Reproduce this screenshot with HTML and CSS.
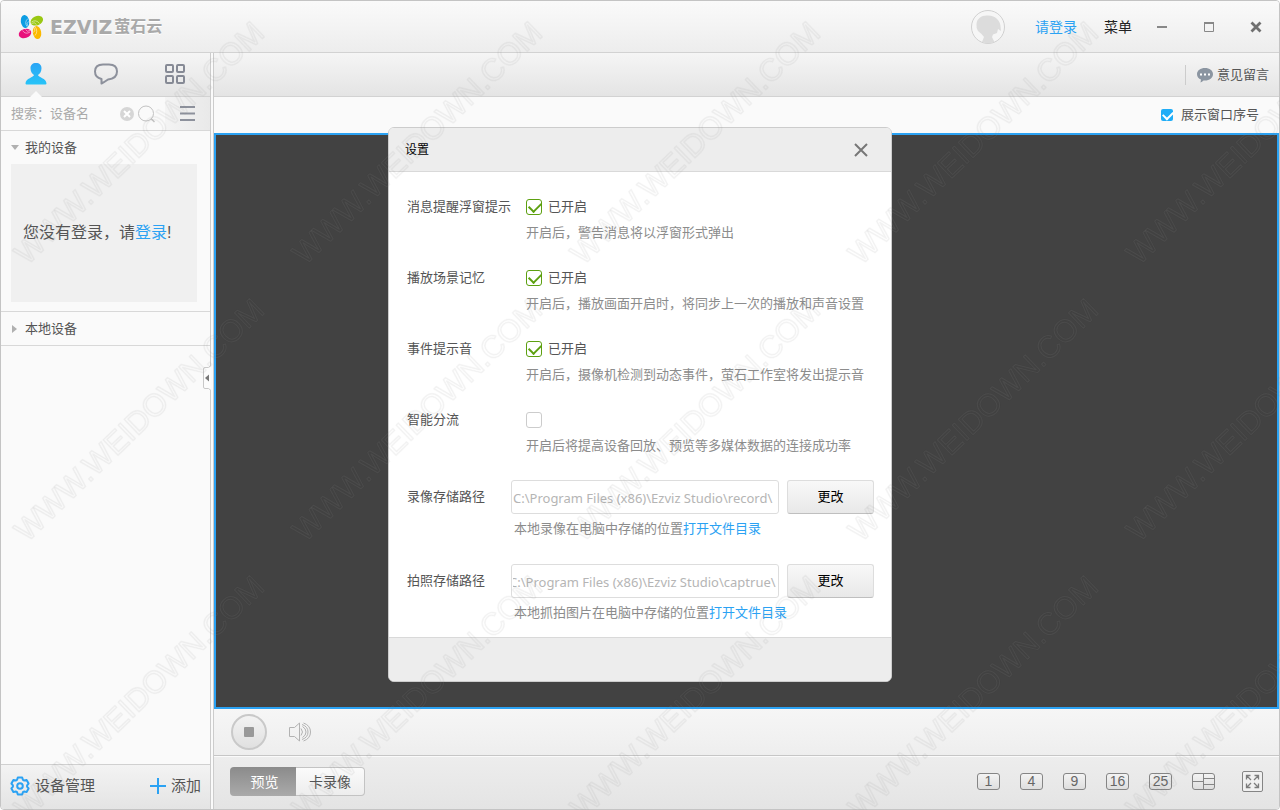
FILE: index.html
```html
<!DOCTYPE html>
<html lang="zh-CN">
<head>
<meta charset="utf-8">
<title>EZVIZ萤石云</title>
<link rel="stylesheet" href="styles.css">
</head>
<body>
<div class="window">
  <header class="titlebar">
    <div class="brand">
      <svg class="brand-mark" width="28" height="26" viewBox="0 0 28 26" aria-hidden="true">
        <ellipse cx="8" cy="7.500" rx="4.200" ry="6.500" fill="#0d9de3" transform="rotate(-8 8 7.500)"/>
        <ellipse cx="19.800" cy="6.700" rx="6.500" ry="4.600" fill="#9ac813" transform="rotate(-22 19.800 6.700)"/>
        <ellipse cx="8" cy="19.500" rx="6.400" ry="4.500" fill="#e8127c" transform="rotate(-18 8 19.500)"/>
        <ellipse cx="20" cy="18.500" rx="4.200" ry="6.600" fill="#fbb900" transform="rotate(-8 20 18.500)"/>
        <path fill="none" stroke="#fff" stroke-width=".5" d="M11 4.500Q7 8 10 12.500M11.500 7.500Q9 9 11 12.500M22.500 9.500Q19 5 14.500 8M19.500 10.500Q17.500 7.500 14.500 9.500M5.500 16.500Q8.500 21 13 18M8.500 15.500Q10 18.500 13 16.500M18 21.500Q21.500 17.500 18 12.500M16.500 18.500Q19 16.500 17 13.500"/>
      </svg>
      <span class="brand-text">EZVIZ</span><span class="brand-cn">萤石云</span>
    </div>
    <div class="account">
      <svg class="avatar" width="36" height="36" viewBox="0 0 36 36" aria-hidden="true">
        <circle cx="18" cy="18" r="16.500" fill="#f6f6f6" stroke="#d0d0d0"/>
        <path fill="#dcdcdc" d="M6.500 15C7 9 12 6 18 6.500C26 6.500 30 12 30.500 17L31 22L28 20L27 24L23 25.500L22 28L24.500 33Q18 35.500 12 33L14 28Q12 25 8 22Q6 19 6.500 15Z"/>
      </svg>
      <a class="login" href="#">请登录</a>
      <button class="menu" type="button">菜单</button>
      <div class="window-buttons">
        <button type="button" aria-label="最小化"><svg width="12" height="12" viewBox="0 0 12 12"><path d="M1 6H11" stroke="#888" stroke-width="2"/></svg></button>
        <button type="button" aria-label="最大化"><svg width="12" height="12" viewBox="0 0 12 12"><path d="M1.500 1.500h9v9h-9z" fill="none" stroke="#888"/><path d="M1 2h10" stroke="#888" stroke-width="2"/></svg></button>
        <button type="button" aria-label="关闭"><svg width="12" height="12" viewBox="0 0 12 12"><path d="M1.500 1.500L10.500 10.500M10.500 1.500L1.500 10.500" stroke="#707070" stroke-width="2.800"/></svg></button>
      </div>
    </div>
  </header>

  <div class="workspace">
    <aside class="sidebar">
      <nav class="tabs">
        <button class="tab tab-active" type="button" aria-label="设备">
          <svg width="22" height="22" viewBox="0 0 22 22"><defs><linearGradient id="blue" x2="0" y2="1"><stop stop-color="#2aa4f5"/><stop offset="1" stop-color="#27c4f8"/></linearGradient></defs><path fill="url(#blue)" d="M11 0C14.500 0 16.500 2 16.500 5.200C16.500 9 14.500 11 13 12C13 14.500 21.500 15 21.500 20.500Q21.500 21.500 20.500 21.500H1.500Q.5 21.500 .5 20.500C.5 15 9 14.500 9 12C7.500 11 5.500 9 5.500 5.200C5.500 2 7.500 0 11 0Z"/></svg>
        </button>
        <button class="tab" type="button" aria-label="消息">
          <svg width="24" height="22" viewBox="0 0 24 22"><path fill="none" stroke="#8d919c" stroke-width="2" stroke-linejoin="round" d="M9 1.500H15C20.500 1.500 23 4.500 23 8.500C23 13.500 19 16 14 16.500Q10.500 19 7.500 20.500L7.500 16C3.500 15 1 12.500 1 8.500C1 4.500 3.500 1.500 9 1.500Z"/></svg>
        </button>
        <button class="tab" type="button" aria-label="应用">
          <svg width="22" height="22" viewBox="0 0 22 22"><g fill="none" stroke="#868a95" stroke-width="2"><rect x="2" y="2" width="7" height="7" rx="1"/><rect x="13" y="2" width="7" height="7" rx="1"/><rect x="2" y="13" width="7" height="7" rx="1"/><rect x="13" y="13" width="7" height="7" rx="1"/></g></svg>
        </button>
      </nav>
      <div class="search">
        <input class="search-input" type="text" placeholder="搜索：设备名" aria-label="搜索：设备名">
        <button class="search-icon" type="button" aria-label="清除"><svg width="14" height="14" viewBox="0 0 14 14"><circle cx="7" cy="7" r="7" fill="#d6d6d6"/><path d="M4 4L10 10M10 4L4 10" stroke="#fff" stroke-width="2"/></svg></button>
        <button class="search-icon" type="button" aria-label="搜索"><svg width="20" height="18" viewBox="0 0 20 18"><circle cx="9" cy="8.500" r="7.500" fill="none" stroke="#c2c2c2"/><path d="M14 13.500L17.500 17" stroke="#c2c2c2" stroke-width="1.500"/></svg></button>
        <button class="list-button" type="button" aria-label="列表"><svg width="15" height="15" viewBox="0 0 15 15"><path d="M0 1H15M0 7.500H15M0 14H15" stroke="#8d919c" stroke-width="2"/></svg></button>
      </div>
      <section class="group group-open">
        <h2 class="group-title"><svg width="8" height="6" viewBox="0 0 8 6"><path d="M0 0H8L4 5Z" fill="#b0b0b0"/></svg>我的设备</h2>
        <p class="notice">您没有登录，请<a href="#">登录</a>!</p>
      </section>
      <section class="group">
        <h2 class="group-title"><svg width="8" height="8" viewBox="0 0 8 8"><path d="M1 0L6 4L1 8Z" fill="#b0b0b0"/></svg>本地设备</h2>
      </section>
      <button class="collapse" type="button" aria-label="收起"><svg width="8" height="26" viewBox="0 0 8 26"><path fill="#fcfcfc" stroke="#c8c8c8" d="M8 .5L5.500 2.500H2Q.5 2.500 .5 4V22Q.5 23.500 2 23.500H5.500L8 25.500"/><path d="M6 9.500V16.500L2 13Z" fill="#777"/></svg></button>
      <footer class="side-footer">
        <button type="button"><svg width="20" height="20" viewBox="0 0 20 20"><g fill="none" stroke="#2ba2f3" stroke-width="2" stroke-linejoin="round"><path d="M7.800 1.500h4.400l.7 2.300 1.400.7 2.300-.6 2 3.600-1.500 1.800v1.400l1.500 1.800-2 3.600-2.300-.6-1.400.7-.7 2.300H7.800l-.7-2.300-1.400-.7-2.300.6-2-3.600 1.500-1.800V9.300L1.400 7.500l2-3.600 2.300.6 1.400-.7z"/><circle cx="10" cy="10" r="2.800"/></g></svg>设备管理</button>
        <button type="button"><svg width="16" height="16" viewBox="0 0 16 16"><path d="M8 0V16M0 8H16" stroke="#2ba2f3" stroke-width="2"/></svg>添加</button>
      </footer>
    </aside>

    <main class="main">
      <div class="toolbar">
        <button class="feedback" type="button"><svg width="16" height="16" viewBox="0 0 16 16"><path fill="#8b95a1" d="M8 1C12.500 1 16 3.500 16 7.200S12.500 13.500 8 13.500Q7 13.500 6.500 13.400Q5 15 3.500 15.500L4 12.600C1.500 11.500 0 9.500 0 7.200C0 3.500 3.500 1 8 1Z"/><g fill="#fff"><rect x="3" y="6.500" width="2" height="2"/><rect x="7" y="6.500" width="2" height="2"/><rect x="11" y="6.500" width="2" height="2"/></g></svg>意见留言</button>
      </div>
      <div class="options">
        <label class="show-index"><input type="checkbox" checked>展示窗口序号</label>
      </div>
      <div class="video"></div>
      <div class="controls">
        <button class="stop" type="button" aria-label="停止"><span class="stop-square"></span></button>
        <button class="volume" type="button" aria-label="音量"><svg width="22" height="20" viewBox="0 0 22 20"><g fill="none" stroke="#b2b2b2"><path d="M.5 5.500H5.500L10.500 1V19L5.500 14.500H.5Z"/><path d="M12 6.500Q15 10 12 13.500M14.500 1Q21.500 3.500 21.500 10T14.500 19M13.500 4.500Q17 6.500 17 10T13.500 15.500M13 2.500Q19 4.500 19 10T13 17.500"/></g></svg></button>
      </div>
      <div class="bottom-bar">
        <div class="modes">
          <button class="mode mode-active" type="button">预览</button>
          <button class="mode" type="button">卡录像</button>
        </div>
        <div class="layouts">
          <button class="grid-button" type="button">1</button>
          <button class="grid-button" type="button">4</button>
          <button class="grid-button" type="button">9</button>
          <button class="grid-button" type="button">16</button>
          <button class="grid-button" type="button">25</button>
          <button class="grid-button" type="button" aria-label="自定义分屏"><svg width="21" height="15" viewBox="0 0 21 15"><path d="M0 7.500H11M10.500 0V15M11 4.500H21M11 10.500H21" stroke="#858585" fill="none"/></svg></button>
          <button class="fullscreen" type="button" aria-label="全屏"><svg width="15" height="15" viewBox="0 0 15 15"><path fill="none" stroke="#7c7c7c" stroke-width="1.300" d="M1.500 5.500V1.500H5.500M1.500 1.500L6 6M9.500 1.500H13.500V5.500M13.500 1.500L9 6M1.500 9.500V13.500H5.500M1.500 13.500L6 9M9.500 13.500H13.500V9.500M13.500 13.500L9 9"/></svg></button>
        </div>
      </div>
    </main>
  </div>
</div>

<div class="overlay">
  <section class="dialog" role="dialog" aria-labelledby="dialog-title">
    <header class="dialog-header">
      <h1 id="dialog-title">设置</h1>
      <button class="dialog-close" type="button" aria-label="关闭"><svg width="14" height="14" viewBox="0 0 14 14"><path d="M1 1L13 13M13 1L1 13" stroke="#777" stroke-width="2"/></svg></button>
    </header>
    <div class="dialog-body">
      <div class="setting">
        <span class="setting-name" id="n1">消息提醒浮窗提示</span>
        <label class="switch"><input type="checkbox" checked aria-describedby="n1">已开启</label>
        <p class="hint">开启后，警告消息将以浮窗形式弹出</p>
      </div>
      <div class="setting">
        <span class="setting-name" id="n2">播放场景记忆</span>
        <label class="switch"><input type="checkbox" checked aria-describedby="n2">已开启</label>
        <p class="hint">开启后，播放画面开启时，将同步上一次的播放和声音设置</p>
      </div>
      <div class="setting">
        <span class="setting-name" id="n3">事件提示音</span>
        <label class="switch"><input type="checkbox" checked aria-describedby="n3">已开启</label>
        <p class="hint">开启后，摄像机检测到动态事件，萤石工作室将发出提示音</p>
      </div>
      <div class="setting">
        <label class="setting-name" for="split">智能分流</label>
        <span class="switch"><input type="checkbox" id="split"></span>
        <p class="hint">开启后将提高设备回放、预览等多媒体数据的连接成功率</p>
      </div>
      <div class="path">
        <label class="setting-name" for="record">录像存储路径</label>
        <div class="path-row">
          <input class="path-input" id="record" type="text" value="C:\Program Files (x86)\Ezviz Studio\record\">
          <button class="change" type="button">更改</button>
        </div>
        <p class="path-hint">本地录像在电脑中存储的位置<a href="#">打开文件目录</a></p>
      </div>
      <div class="path">
        <label class="setting-name" for="capture">拍照存储路径</label>
        <div class="path-row">
          <input class="path-input" id="capture" type="text" value="C:\Program Files (x86)\Ezviz Studio\captrue\">
          <button class="change" type="button">更改</button>
        </div>
        <p class="path-hint">本地抓拍图片在电脑中存储的位置<a href="#">打开文件目录</a></p>
      </div>
    </div>
    <footer class="dialog-footer"></footer>
  </section>
</div>

<svg class="watermark" aria-hidden="true">
  <defs>
    <g id="mark">
      <text class="mark-outer" transform="translate(27 266) rotate(-44)">WWW.WEIDOWN.COM</text>
      <text class="mark-inner" transform="translate(27 266) rotate(-44)">WWW.WEIDOWN.COM</text>
    </g>
    <g id="row">
      <use href="#mark"/><use href="#mark" x="278"/><use href="#mark" x="556"/><use href="#mark" x="834"/><use href="#mark" x="1112"/>
    </g>
  </defs>
  <use href="#row"/><use href="#row" y="277"/><use href="#row" y="554"/>
</svg>
<script src="app.js"></script>
</body>
</html>
```
FILE: styles.css
```css
* { box-sizing: border-box; }

body {
  margin: 0;
  background: #fff;
  color: #555;
  font: 13px/20px "Liberation Sans", "Noto Sans CJK SC", sans-serif;
}

h1, h2, p { margin: 0; font-weight: normal; }
a { color: #2ba2f3; text-decoration: none; }
svg { display: block; flex: none; }

button {
  display: flex;
  align-items: center;
  justify-content: center;
  margin: 0;
  padding: 0;
  border: 0;
  background: none;
  color: inherit;
  font: inherit;
}

input { font: inherit; }

.window {
  display: flex;
  flex-direction: column;
  height: 100vh;
  overflow: hidden;
  border: 1px solid #c4c4c4;
  border-radius: 4px;
  background: #fafafa;
}

.titlebar {
  display: flex;
  align-items: center;
  justify-content: space-between;
  height: 52px;
  padding: 0 17px 0 16px;
  border-bottom: 1px solid #d2d2d2;
  background: linear-gradient(#fafafa, #ededed);
}

.brand { display: flex; align-items: center; }
.brand-mark { margin-right: 5px; }
.brand-text, .brand-cn { color: #a9a9a9; text-shadow: 0 1px 0 #fff; }
.brand-text { font-family: "DejaVu Sans", sans-serif; font-size: 19px; font-weight: bold; }
.brand-cn { margin-left: 2px; font-size: 16px; font-weight: bold; }

.account { display: flex; align-items: center; font-size: 14px; }
.avatar { margin-right: 2px; }
.login { margin: 0 27px; }
.menu { margin-right: 24px; color: #222; }
.window-buttons { display: flex; gap: 35px; }

.workspace { display: flex; flex: 1; min-height: 0; }

.sidebar {
  position: relative;
  display: flex;
  flex: none;
  flex-direction: column;
  width: 210px;
  margin-right: 2px;
  border-right: 1px solid #ccc;
}

.tabs {
  display: flex;
  height: 44px;
  padding-bottom: 2px;
  border-bottom: 1px solid #d2d2d2;
  background: linear-gradient(#f5f5f5, #e4e4e4);
}

.tab { position: relative; flex: 1; }

.tab-active::after {
  content: "";
  position: absolute;
  left: 50%;
  bottom: -3px;
  border: 6px solid transparent;
  border-top: 0;
  border-bottom-color: #fafafa;
  transform: translateX(-50%);
}

.search {
  display: flex;
  height: 34px;
  padding-left: 10px;
  border-bottom: 1px solid #d8d8d8;
}

.search-input {
  flex: 1;
  min-width: 0;
  padding: 0;
  border: 0;
  outline: 0;
  background: none;
}

.search-input::placeholder { color: #aaa; opacity: 1; }
.search-icon { margin-right: 3px; }
.list-button { width: 45px; margin-left: 5px; background: linear-gradient(90deg, #f4f4f4, #e9e9e9); }

.group { border-bottom: 1px solid #d8d8d8; }
.group-open { padding-bottom: 9px; }

.group-title {
  display: flex;
  align-items: center;
  gap: 6px;
  height: 33px;
  padding-left: 10px;
  font-size: 13px;
}

.notice {
  display: flex;
  align-items: center;
  height: 138px;
  margin: 0 13px 0 10px;
  padding-left: 12px;
  background: #f0f0f0;
  font-size: 16px;
}

.collapse { position: absolute; right: -1px; top: 312px; }

.side-footer {
  display: flex;
  justify-content: space-between;
  height: 45px;
  margin-top: auto;
  padding: 0 9px 2px;
  border-top: 1px solid #d0d0d0;
  background: linear-gradient(#f3f3f3, #e4e4e4);
  font-size: 15px;
}

.side-footer button { gap: 5px; }

.main {
  display: flex;
  flex: 1;
  flex-direction: column;
  min-width: 0;
  border-left: 1px solid #ccc;
}

.toolbar {
  display: flex;
  align-items: center;
  justify-content: flex-end;
  height: 44px;
  padding-right: 10px;
  border-bottom: 1px solid #d2d2d2;
  background: linear-gradient(#f5f5f5, #e4e4e4);
}

.feedback { gap: 4px; padding-left: 11px; border-left: 1px solid #ccc; }

.options {
  display: flex;
  align-items: center;
  justify-content: flex-end;
  height: 36px;
  padding-right: 20px;
}

.show-index { display: flex; align-items: center; gap: 8px; }

.show-index input {
  width: 12px;
  height: 12px;
  margin: 0;
  border-radius: 2px;
  appearance: none;
  background: #1fadf7;
}

.show-index input:checked::before {
  content: "";
  display: block;
  width: 8px;
  height: 5px;
  margin: 2px;
  border: solid #fff;
  border-width: 0 0 2px 2px;
  transform: rotate(-45deg);
}

.video { flex: 1; border: 2px solid #2ba2f3; background: #424242; }

.controls {
  display: flex;
  align-items: center;
  gap: 22px;
  height: 47px;
  padding: 0 17px 1px;
  border-bottom: 1px solid #c6c6c6;
  background: linear-gradient(#f6f6f6, #eee);
}

.stop {
  width: 36px;
  height: 36px;
  border: 2px solid #c9c9c9;
  border-radius: 50%;
  background: linear-gradient(#f3f3f3, #e0e0e0);
}

.stop-square { width: 10px; height: 10px; border-radius: 1px; background: #999; }

.bottom-bar {
  display: flex;
  align-items: center;
  justify-content: space-between;
  height: 53px;
  padding: 0 16px 3px;
  border-top: 1px solid #fafafa;
  background: linear-gradient(#ededed, #e4e4e4);
}

.modes { display: flex; font-size: 14px; }

.mode {
  width: 69px;
  height: 29px;
  border: 1px solid #c3c3c3;
  border-left: 0;
  border-radius: 0 4px 4px 0;
  background: linear-gradient(#fbfbfb, #ededed);
}

.mode-active {
  width: 66px;
  border: 0;
  border-radius: 4px 0 0 4px;
  padding-left: 3px;
  background: linear-gradient(#8b8b8b, #aaa);
  color: #fff;
}

.layouts { display: flex; align-items: center; gap: 20px; }

.grid-button {
  width: 23px;
  height: 17px;
  border: 1px solid #858585;
  border-radius: 3px;
  background: linear-gradient(#f3f3f3, #dedede);
  color: #666;
  font-size: 14px;
  line-height: 15px;
}

.fullscreen {
  width: 21px;
  height: 21px;
  margin-left: 7px;
  border: 1px solid #858585;
  border-radius: 2px;
  background: #f0f0f0;
}

.overlay {
  position: fixed;
  inset: 0;
  display: grid;
  place-items: center;
  padding-bottom: 1px;
}

.dialog {
  width: 504px;
  max-width: 100%;
  overflow: hidden;
  border: 1px solid #ccc;
  border-radius: 6px;
  background: #fff;
}

.dialog-header {
  display: flex;
  align-items: center;
  justify-content: space-between;
  height: 44px;
  padding: 1px 23px 0 16px;
  border-bottom: 1px solid #d9d9d9;
  background: #ededed;
}

.dialog-header h1 { color: #000; font-size: 12px; }

.dialog-body {
  display: flex;
  flex-direction: column;
  padding: 22px 17px 11px 18px;
}

.setting {
  display: grid;
  grid-template-columns: 119px 1fr;
  line-height: 26px;
  margin-bottom: 19px;
}

.switch { display: flex; align-items: center; gap: 6px; }

.switch input {
  width: 16px;
  height: 16px;
  margin: 0;
  border: 1px solid #ccc;
  border-radius: 3px;
  appearance: none;
  background: #fff;
}

.switch input:checked { border-color: #5da010; }

.switch input:checked::before {
  content: "";
  display: block;
  width: 10px;
  height: 6px;
  margin: 3px 2px;
  border: solid #5da010;
  border-width: 0 0 2px 2px;
  transform: translateY(-1px) rotate(-45deg);
}

.hint { grid-column: 2; color: #8c8c8c; }

.path {
  display: grid;
  grid-template-columns: 104px 1fr;
  row-gap: 2px;
  margin-top: 2px;
  margin-bottom: 20px;
}

.path:last-child { margin-bottom: 0; }
.path .setting-name { line-height: 34px; }
.path-row { display: flex; gap: 8px; }

.path-input {
  flex: 1;
  min-width: 0;
  height: 34px;
  padding: 2px 2px 0 1px;
  border: 1px solid #ddd;
  border-radius: 3px;
  outline: 0;
  background: #fff;
  color: #b5b5b5;
  font-family: "Noto Sans", sans-serif;
}

.change {
  width: 87px;
  height: 34px;
  border: 1px solid #ddd;
  border-bottom-color: #bfbfbf;
  border-radius: 3px;
  background: linear-gradient(#f8f8f8, #e8e8e8);
  color: #000;
}

.path-hint { grid-column: 2; padding-left: 3px; color: #8c8c8c; line-height: 26px; }

.dialog-footer { height: 44px; border-top: 1px solid #d9d9d9; background: #ededed; }

.watermark {
  position: fixed;
  inset: 0;
  width: 100%;
  height: 100%;
  pointer-events: none;
}

.mark-outer, .mark-inner {
  fill: none;
  font: 31px "Liberation Sans", sans-serif;
  stroke-linejoin: round;
}

.mark-outer { stroke: #000; stroke-opacity: .03; stroke-width: 2px; }
.mark-inner { stroke: #bbb; stroke-opacity: .09; stroke-width: 1px; }
```
FILE: app.js
```js
// Keep the end of long storage paths in view.
document.querySelectorAll(".path-input").forEach((field) => {
  field.scrollLeft = field.scrollWidth;
});
```
